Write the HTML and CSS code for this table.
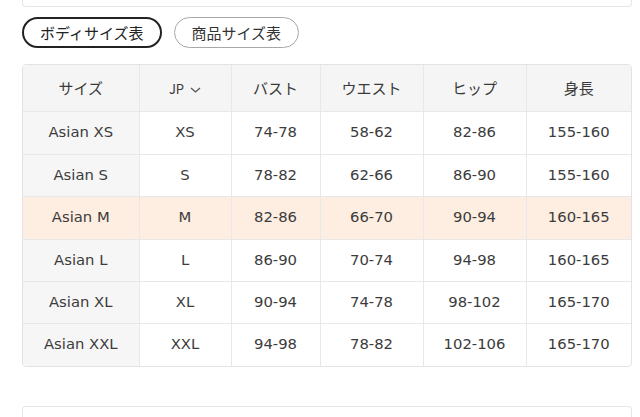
FILE: index.html
```html
<!DOCTYPE html>
<html lang="ja">
<head>
<meta charset="utf-8">
<link rel="stylesheet" href="styles.css">
</head>
<body>
<div class="page">
  <div class="top-card"></div>
  <div class="tabs">
    <button class="pill pill-active">ボディサイズ表</button>
    <button class="pill">商品サイズ表</button>
  </div>
  <div class="table-wrap">
    <table class="size-table">
      <colgroup>
        <col class="c1"><col class="c2"><col class="c3"><col class="c4"><col class="c5"><col class="c6">
      </colgroup>
      <thead>
        <tr>
          <th>サイズ</th>
          <th><span class="jp">JP <svg class="chev" width="11" height="6" viewBox="0 0 11 6"><path d="M1 1l4.5 4L10 1" fill="none" stroke="#555" stroke-width="1.3"/></svg></span></th>
          <th>バスト</th>
          <th>ウエスト</th>
          <th>ヒップ</th>
          <th>身長</th>
        </tr>
      </thead>
      <tbody>
        <tr><td>Asian XS</td><td>XS</td><td>74-78</td><td>58-62</td><td>82-86</td><td>155-160</td></tr>
        <tr class="short"><td>Asian S</td><td>S</td><td>78-82</td><td>62-66</td><td>86-90</td><td>155-160</td></tr>
        <tr class="hl"><td>Asian M</td><td>M</td><td>82-86</td><td>66-70</td><td>90-94</td><td>160-165</td></tr>
        <tr class="short"><td>Asian L</td><td>L</td><td>86-90</td><td>70-74</td><td>94-98</td><td>160-165</td></tr>
        <tr class="short"><td>Asian XL</td><td>XL</td><td>90-94</td><td>74-78</td><td>98-102</td><td>165-170</td></tr>
        <tr class="short"><td>Asian XXL</td><td>XXL</td><td>94-98</td><td>78-82</td><td>102-106</td><td>165-170</td></tr>
      </tbody>
    </table>
  </div>
  <div class="bottom-card"></div>
</div>
</body>
</html>
```
FILE: styles.css
```css
html, body {
  margin: 0;
  padding: 0;
  background: #fff;
}
body {
  font-family: "DejaVu Sans", "Noto Sans CJK JP", sans-serif;
  color: #3c3c3c;
  overflow: hidden;
}
.page {
  padding: 0 8px 0 22px;
  width: 610px;
}
.top-card {
  height: 6px;
  border: 1px solid #e6e6e6;
  border-top: none;
  border-radius: 0 0 4px 4px;
}
.tabs {
  display: flex;
  gap: 12px;
  margin-top: 10px;
}
.pill {
  height: 31px;
  padding: 0 17px;
  border: 1px solid #a8a8a8;
  border-radius: 16px;
  background: #fff;
  font-family: "Noto Sans CJK JP", sans-serif;
  font-size: 15px;
  color: #333;
  line-height: 1;
  box-sizing: border-box;
}
.pill-active {
  padding: 0 16px;
  border: 2px solid #222;
  color: #222;
}
.table-wrap {
  margin-top: 16px;
  border: 1px solid #e3e3e3;
  border-radius: 4px;
  overflow: hidden;
  width: 608px;
}
.size-table {
  border-collapse: collapse;
  table-layout: fixed;
  width: 608px;
}
.c1 { width: 116px; }
.c2 { width: 92px; }
.c3 { width: 89px; }
.c4 { width: 103px; }
.c5 { width: 103px; }
.c6 { width: 105px; }
.size-table th,
.size-table td {
  text-align: center;
  vertical-align: middle;
  padding: 0;
  border-left: 1px solid #e8e8e8;
  border-top: 1px solid #e8e8e8;
}
.size-table tr > :first-child {
  border-left: none;
}
.size-table th {
  height: 45px;
  background: #f5f5f5;
  font-family: "Noto Sans CJK JP", sans-serif;
  font-weight: normal;
  font-size: 15px;
  color: #3a3a3a;
  border-top: none;
  padding-bottom: 1px;
}
.size-table td {
  height: 43px;
  font-size: 14.8px;
  color: #3c3c3c;
  padding-bottom: 3px;
  box-sizing: border-box;
}
.size-table tr.short td {
  height: 42px;
}
.size-table td:first-child {
  background: #f6f6f6;
}
.size-table tr.hl td {
  background: #fdeee1;
}
.jp {
  display: inline-flex;
  align-items: center;
  gap: 6px;
  font-size: 13px;
}
.chev {
  display: block;
  margin-top: 2px;
}
.bottom-card {
  margin-top: 39px;
  height: 10px;
  border: 1px solid #e6e6e6;
  border-bottom: none;
  border-radius: 4px 4px 0 0;
}
```
